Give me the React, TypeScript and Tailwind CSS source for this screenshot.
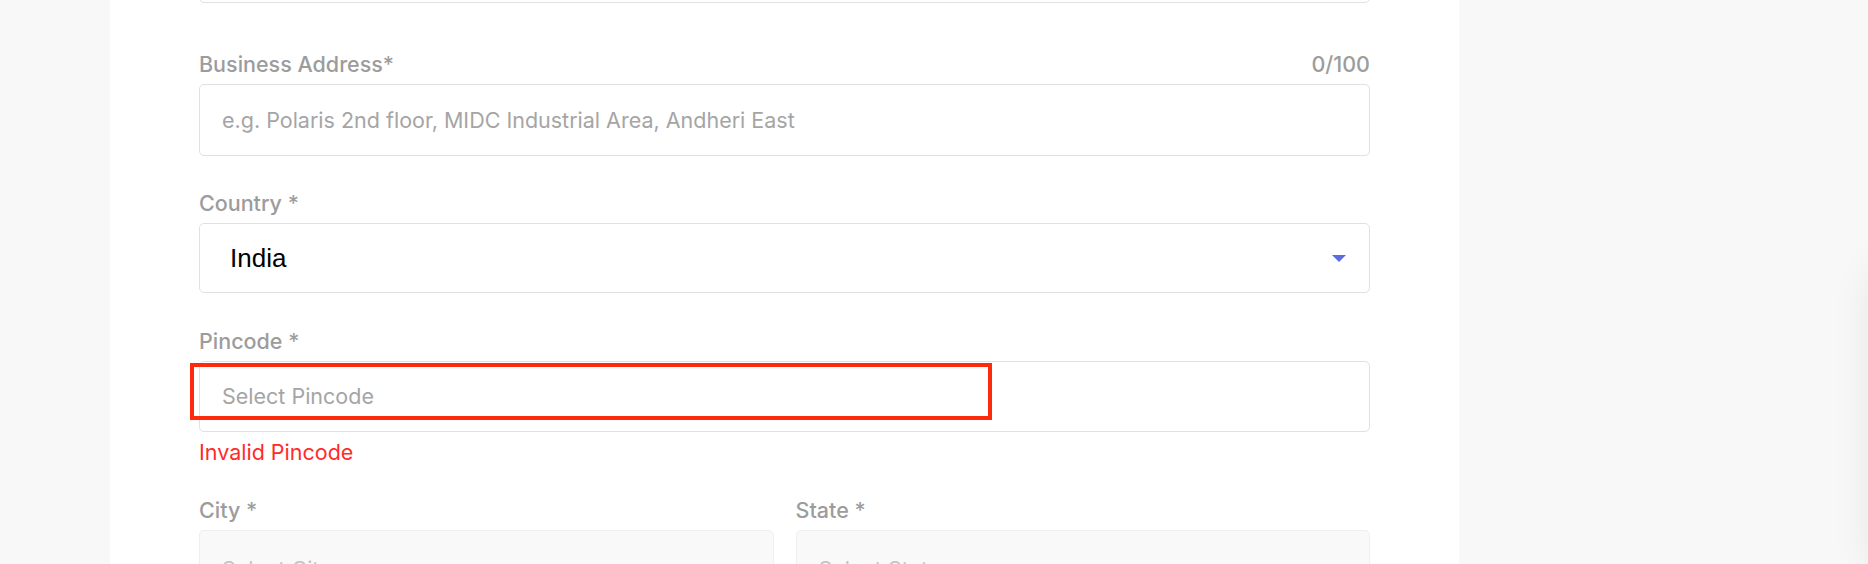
import React from "react";

const font = { fontFamily: "Inter, 'Noto Sans', sans-serif" };

const Label = ({ text, extra }: { text: string; extra?: string }) => (
    <div className="flex justify-between items-center mb-2 text-[21.5px] leading-[24px] font-medium text-[#9c9c9c]">
        <span>{text}</span>
        {extra && <span>{extra}</span>}
    </div>
);

export default function App() {
    return (
        <div className="relative h-[564px] overflow-hidden bg-[#f8f8f8]" style={font}>
            {/* Panel */}
            <div className="ml-[110px] w-[1349px] h-[564px] bg-white px-[89px] overflow-hidden">
                {/* previous field, scrolled out of view */}
                <div className="-mt-[68px] h-[71px] rounded-[5px] border border-[#e1e1e1]" />

                <div className="mt-[49px]">
                    <Label text="Business Address*" extra="0/100" />
                    <div className="h-[72px] rounded-[5px] border border-[#e1e1e1] px-[22px] flex items-center text-[21.5px] text-[#a5a5a5]">
                        e.g. Polaris 2nd floor, MIDC Industrial Area, Andheri East
                    </div>
                </div>

                <div className="mt-[35px]">
                    <Label text="Country *" />
                    <div className="h-[70px] rounded-[5px] border border-[#e1e1e1] pl-[30px] pr-[23px] flex items-center justify-between">
                        <span className="text-[26px] text-black" style={{ fontFamily: "'Liberation Sans', Arial, sans-serif" }}>
                            India
                        </span>
                        <svg width="14" height="8" viewBox="0 0 14 8" className="mt-[2px]">
                            <path d="M0 0 H14 L7 7 Z" fill="#5c6ce0" />
                        </svg>
                    </div>
                </div>

                <div className="mt-[36px]">
                    <Label text="Pincode *" />
                    <div className="relative h-[71px] rounded-[5px] border border-[#e1e1e1] px-[22px] flex items-center text-[21.5px] text-[#a5a5a5]">
                        Select Pincode
                        {/* annotation box */}
                        <div className="absolute left-[-10px] top-[1px] w-[802px] h-[57px] border-[4px] border-[#ff2a0c] pointer-events-none" />
                    </div>
                    <div className="mt-[8px] text-[21.5px] leading-[24px] text-[#ff2b2b]">Invalid Pincode</div>
                </div>

                <div className="mt-[34px] grid grid-cols-2 gap-[22px]">
                    <div>
                        <Label text="City *" />
                        <div className="h-[71px] rounded-[5px] border border-[#efefef] bg-[#f9f9f9] px-[22px] pt-[22px] text-[21.5px] text-[#c4c4c4]">
                            Select City
                        </div>
                    </div>
                    <div>
                        <Label text="State *" />
                        <div className="h-[71px] rounded-[5px] border border-[#efefef] bg-[#f9f9f9] px-[22px] pt-[22px] text-[21.5px] text-[#c4c4c4]">
                            Select State
                        </div>
                    </div>
                </div>
            </div>

            {/* shadow of a drawer off the right edge */}
            <div className="absolute right-[-70px] top-[260px] w-[70px] h-[320px] rounded-full bg-[#f8f8f8] shadow-[0_0_40px_rgba(0,0,0,0.07)]" />
        </div>
    );
}
